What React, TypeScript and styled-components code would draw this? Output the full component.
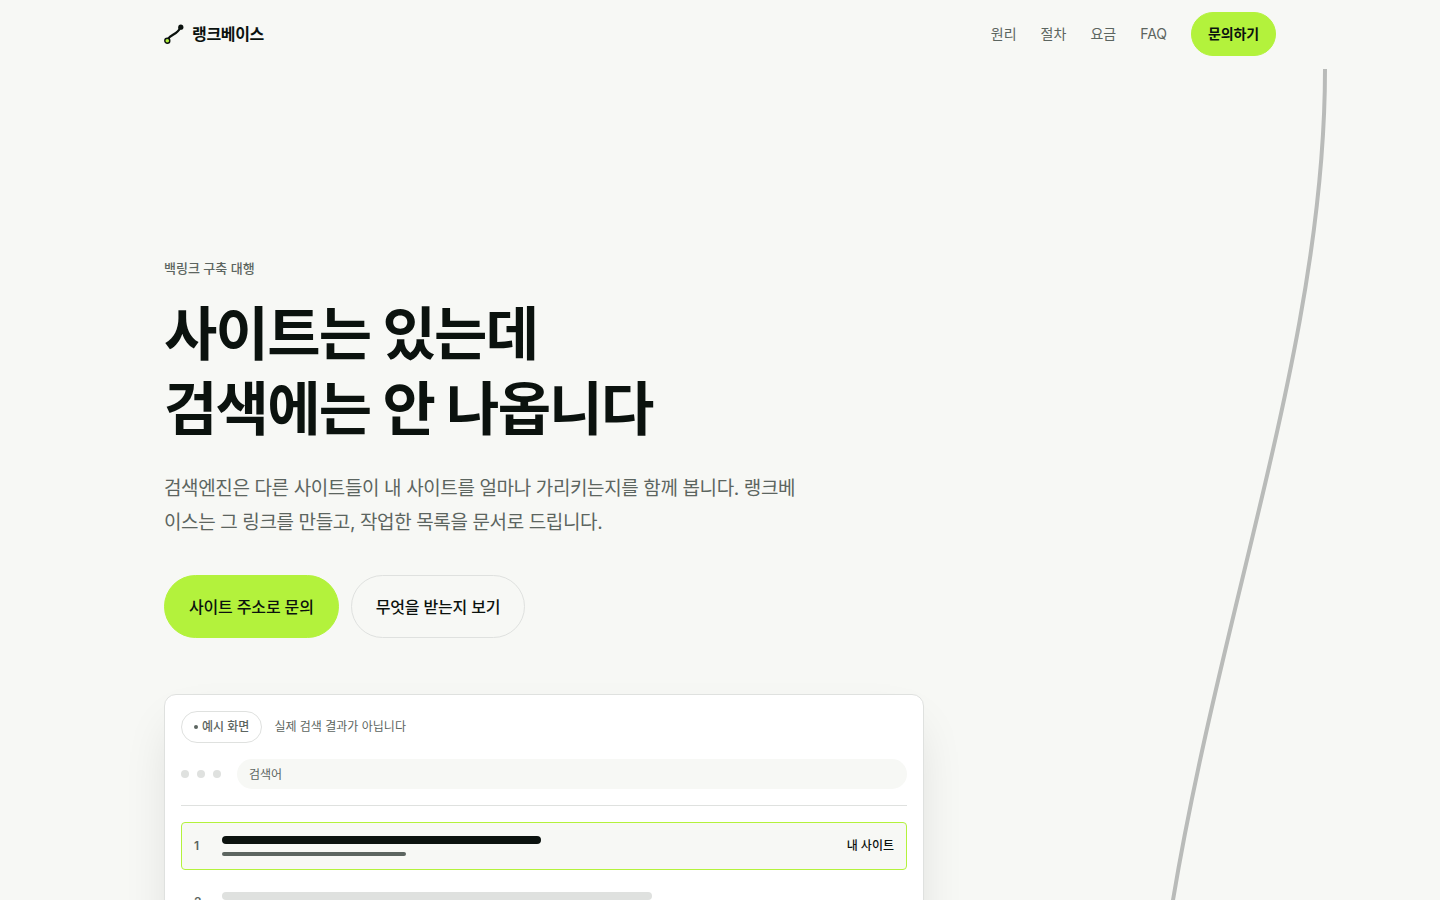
import React from "react";
import styled, { createGlobalStyle } from "styled-components";

const c = {
  paper: "#f7f8f5",
  ink: "#0b120e",
  muted: "#5c6560",
  line: "#dfe1df",
  lime: "#b3f23c",
  white: "#ffffff",
};

const GlobalStyle = createGlobalStyle`
  *, *::before, *::after { box-sizing: border-box; }
  body {
    margin: 0;
    background: ${c.paper};
    color: ${c.ink};
    font-family: Inter, "Noto Sans CJK KR", sans-serif;
    font-size: 16px;
  }
  h1, p, ol { margin: 0; padding: 0; }
`;

const Page = styled.div`
  min-height: 100vh;
`;

const Container = styled.div`
  width: 100%;
  max-width: 1160px;
  margin: 0 auto;
  padding: 0 24px;
`;

const Header = styled.header`
  position: sticky;
  top: 0;
  z-index: 2;
  background: ${c.paper};
  border-bottom: 1px solid ${c.paper};
`;

const Bar = styled(Container)`
  display: flex;
  align-items: center;
  justify-content: space-between;
  height: 68px;
`;

const Brand = styled.a`
  display: flex;
  align-items: center;
  gap: 8px;
  color: ${c.ink};
  font-size: 16px;
  font-weight: 700;
  line-height: 24px;
  letter-spacing: -0.02em;
  text-decoration: none;
`;

const Nav = styled.nav`
  display: flex;
  align-items: center;
  gap: 24px;
`;

const NavLink = styled.a`
  color: ${c.muted};
  font-size: 14px;
  line-height: 24px;
  text-decoration: none;
`;

const PillLink = styled.a<{ $kind?: "outline"; $small?: boolean }>`
  display: inline-flex;
  align-items: center;
  justify-content: center;
  height: ${(p) => (p.$small ? 44 : 63)}px;
  padding: 0 ${(p) => (p.$small ? 16 : 24)}px;
  border: 1px solid ${(p) => (p.$kind === "outline" ? c.line : c.lime)};
  border-radius: 32px;
  background: ${(p) => (p.$kind === "outline" ? "transparent" : c.lime)};
  color: ${c.ink};
  font-size: ${(p) => (p.$small ? 14 : 16)}px;
  font-weight: ${(p) => (p.$small ? 700 : 500)};
  line-height: 24px;
  letter-spacing: -0.01em;
  text-decoration: none;
`;

const Hero = styled.main`
  position: relative;
  overflow: hidden;
  padding: 188px 0 96px;
`;

const Thread = styled.svg`
  position: absolute;
  top: 0;
  right: 110px;
  width: 240px;
  height: 1000px;
`;

const Content = styled(Container)`
  position: relative;
`;

const Eyebrow = styled.p`
  color: ${c.muted};
  font-size: 13px;
  font-weight: 500;
  line-height: 22px;
`;

const Title = styled.h1`
  margin-top: 18px;
  font-size: 58px;
  font-weight: 700;
  line-height: 75px;
  letter-spacing: -0.03em;
`;

const Lead = styled.p`
  max-width: 640px;
  margin-top: 25px;
  color: ${c.muted};
  font-size: 19px;
  line-height: 34px;
  letter-spacing: -0.02em;
`;

const Actions = styled.div`
  display: flex;
  flex-wrap: wrap;
  gap: 12px;
  margin-top: 35px;
`;

const Card = styled.section`
  display: flex;
  flex-direction: column;
  gap: 16px;
  max-width: 760px;
  margin-top: 56px;
  padding: 16px;
  border: 1px solid ${c.line};
  border-radius: 12px;
  background: ${c.white};
  box-shadow: 0 24px 48px -12px rgba(11, 15, 12, 0.14);
`;

const CardNote = styled.div`
  display: flex;
  align-items: center;
  gap: 12px;
  color: ${c.muted};
  font-size: 12px;
  line-height: 20px;
`;

const Badge = styled.span`
  display: inline-flex;
  align-items: center;
  gap: 4px;
  height: 32px;
  padding: 0 12px;
  border: 1px solid ${c.line};
  border-radius: 16px;
  font-weight: 500;

  &::before {
    content: "";
    width: 4px;
    height: 4px;
    border-radius: 50%;
    background: ${c.muted};
  }
`;

const Browser = styled.div`
  display: flex;
  align-items: center;
  gap: 16px;
  padding-bottom: 16px;
  border-bottom: 1px solid ${c.line};
`;

const Dots = styled.div`
  display: flex;
  gap: 8px;
`;

const Dot = styled.i`
  width: 8px;
  height: 8px;
  border-radius: 50%;
  background: ${c.line};
`;

const Search = styled.input`
  flex: 1;
  min-width: 0;
  height: 30px;
  padding: 0 12px;
  border: 0;
  border-radius: 15px;
  background: ${c.paper};
  color: ${c.muted};
  font: inherit;
  font-size: 12px;
  line-height: 20px;

  &::placeholder { color: ${c.muted}; opacity: 1; }
`;

const Results = styled.ol`
  display: flex;
  flex-direction: column;
  gap: 8px;
  list-style: none;
`;

const Result = styled.li<{ $own?: boolean }>`
  display: flex;
  align-items: center;
  gap: 12px;
  height: 48px;
  padding: 0 12px;
  border: 1px solid ${(p) => (p.$own ? c.lime : "transparent")};
  border-radius: 4px;
  background: ${(p) => (p.$own ? c.paper : "transparent")};
`;

const Rank = styled.span`
  width: 16px;
  color: ${c.muted};
  font-size: 12px;
  font-weight: 600;
  line-height: 20px;
`;

const Lines = styled.div`
  display: flex;
  flex: 1;
  flex-direction: column;
  gap: 8px;
`;

const Line = styled.span<{ $tone: string; $thin?: boolean }>`
  height: ${(p) => (p.$thin ? 4 : 8)}px;
  border-radius: 4px;
  background: ${(p) => p.$tone};
`;

const Tag = styled.span`
  font-size: 12px;
  font-weight: 500;
  line-height: 20px;
`;

const results = [
  { own: true, title: 52, text: 30 },
  { own: false, title: 64, text: 40 },
  { own: false, title: 56, text: 36 },
];

const Logo = () => (
  <svg width="20" height="20" viewBox="0 0 20 20" fill="none" aria-hidden="true">
    <path d="M4 15C6 11 14 10 16 4" stroke={c.ink} strokeWidth="2.3" />
    <circle cx="16.8" cy="3.2" r="2.6" fill={c.ink} />
    <circle cx="3.3" cy="16.7" r="2.5" fill={c.lime} stroke={c.ink} strokeWidth="1.4" />
  </svg>
);

export default function App() {
  return (
    <Page>
      <GlobalStyle />
      <Header>
        <Bar>
          <Brand href="#top">
            <Logo />
            랭크베이스
          </Brand>
          <Nav aria-label="주요 메뉴">
            <NavLink href="#how">원리</NavLink>
            <NavLink href="#process">절차</NavLink>
            <NavLink href="#pricing">요금</NavLink>
            <NavLink href="#faq">FAQ</NavLink>
            <PillLink href="#contact" $small>문의하기</PillLink>
          </Nav>
        </Bar>
      </Header>
      <Hero id="top">
        <Thread viewBox="0 0 240 1000" fill="none" aria-hidden="true">
          <path d="M235 0C235 268 133 531 83 831C78 861 73 900 70 1000" stroke="#b9bbb9" strokeWidth="4" />
        </Thread>
        <Content>
          <Eyebrow>백링크 구축 대행</Eyebrow>
          <Title>
            사이트는 있는데
            <br />
            검색에는 안 나옵니다
          </Title>
          <Lead>
            검색엔진은 다른 사이트들이 내 사이트를 얼마나 가리키는지를 함께 봅니다. 랭크베이스는 그
            링크를 만들고, 작업한 목록을 문서로 드립니다.
          </Lead>
          <Actions>
            <PillLink href="#contact">사이트 주소로 문의</PillLink>
            <PillLink href="#deliverables" $kind="outline">무엇을 받는지 보기</PillLink>
          </Actions>
          <Card aria-label="예시 화면">
            <CardNote>
              <Badge>예시 화면</Badge>
              실제 검색 결과가 아닙니다
            </CardNote>
            <Browser>
              <Dots>
                <Dot />
                <Dot />
                <Dot />
              </Dots>
              <Search type="search" aria-label="검색어" placeholder="검색어" />
            </Browser>
            <Results>
              {results.map((r, i) => (
                <Result key={i} $own={r.own}>
                  <Rank>{i + 1}</Rank>
                  <Lines>
                    <Line $tone={r.own ? c.ink : c.line} style={{ width: `${r.title}%` }} />
                    <Line $thin $tone={r.own ? c.muted : c.line} style={{ width: `${r.text}%` }} />
                  </Lines>
                  {r.own && <Tag>내 사이트</Tag>}
                </Result>
              ))}
            </Results>
          </Card>
        </Content>
      </Hero>
    </Page>
  );
}
